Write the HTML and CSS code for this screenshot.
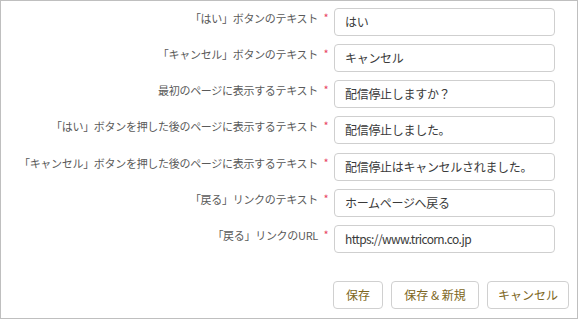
FILE: index.html
```html
<!DOCTYPE html>
<html lang="ja">
<head>
<meta charset="utf-8">
<link rel="stylesheet" href="styles.css">
</head>
<body>
<div class="frame">
  <form class="form">
    <div class="row"><label class="label">「はい」ボタンのテキスト</label><span class="req">*</span><div class="input">はい</div></div>
    <div class="row"><label class="label">「キャンセル」ボタンのテキスト</label><span class="req">*</span><div class="input">キャンセル</div></div>
    <div class="row"><label class="label">最初のページに表示するテキスト</label><span class="req">*</span><div class="input">配信停止しますか？</div></div>
    <div class="row"><label class="label">「はい」ボタンを押した後のページに表示するテキスト</label><span class="req">*</span><div class="input">配信停止しました。</div></div>
    <div class="row"><label class="label">「キャンセル」ボタンを押した後のページに表示するテキスト</label><span class="req">*</span><div class="input">配信停止はキャンセルされました。</div></div>
    <div class="row"><label class="label">「戻る」リンクのテキスト</label><span class="req">*</span><div class="input">ホームページへ戻る</div></div>
    <div class="row"><label class="label">「戻る」リンクのURL</label><span class="req">*</span><div class="input input-url">https://www.tricorn.co.jp</div></div>
    <div class="actions">
      <button type="button" class="btn btn-save">保存</button>
      <button type="button" class="btn btn-new">保存 &amp; 新規</button>
      <button type="button" class="btn btn-cancel">キャンセル</button>
    </div>
  </form>
</div>
</body>
</html>
```
FILE: styles.css
```css
html, body {
  margin: 0;
  padding: 0;
  background: #fff;
}
.frame {
  box-sizing: border-box;
  width: 578px;
  height: 319px;
  border: 1px solid #bfbfbf;
  font-family: "Noto Sans CJK JP", "Noto Sans", sans-serif;
}
.form {
  display: flex;
  flex-direction: column;
  gap: 8.17px;
  padding-top: 7px;
}
.row {
  display: flex;
  align-items: flex-start;
  height: 28px;
}
.label {
  width: 317px;
  text-align: right;
  font-size: 11px;
  letter-spacing: -0.3px;
  color: #5a5a5a;
  line-height: 16px;
  padding-top: 2px;
  white-space: nowrap;
}
.req {
  width: 16px;
  text-align: center;
  color: #e8465f;
  font-size: 11px;
  line-height: 12px;
  padding-top: 3px;
}
.input {
  box-sizing: border-box;
  width: 221px;
  height: 28px;
  border: 1px solid #cfcfcf;
  border-radius: 4px;
  padding: 0 10px;
  font-size: 12px;
  letter-spacing: -0.3px;
  line-height: 26px;
  color: #3a3a3a;
  white-space: nowrap;
}
.input-url {
  letter-spacing: -0.6px;
}
.actions {
  display: flex;
  justify-content: flex-end;
  gap: 8px;
  margin-top: 19.8px;
  padding-right: 8px;
}
.btn {
  box-sizing: border-box;
  height: 28px;
  border: 1px solid #d0d0d0;
  border-radius: 4px;
  background: #fff;
  color: #7d6622;
  font-family: "Noto Sans CJK JP", "Noto Sans", sans-serif;
  font-size: 12px;
  padding: 0;
}
.btn-save { width: 50px; }
.btn-new { width: 88px; }
.btn-cancel { width: 82px; }
```
